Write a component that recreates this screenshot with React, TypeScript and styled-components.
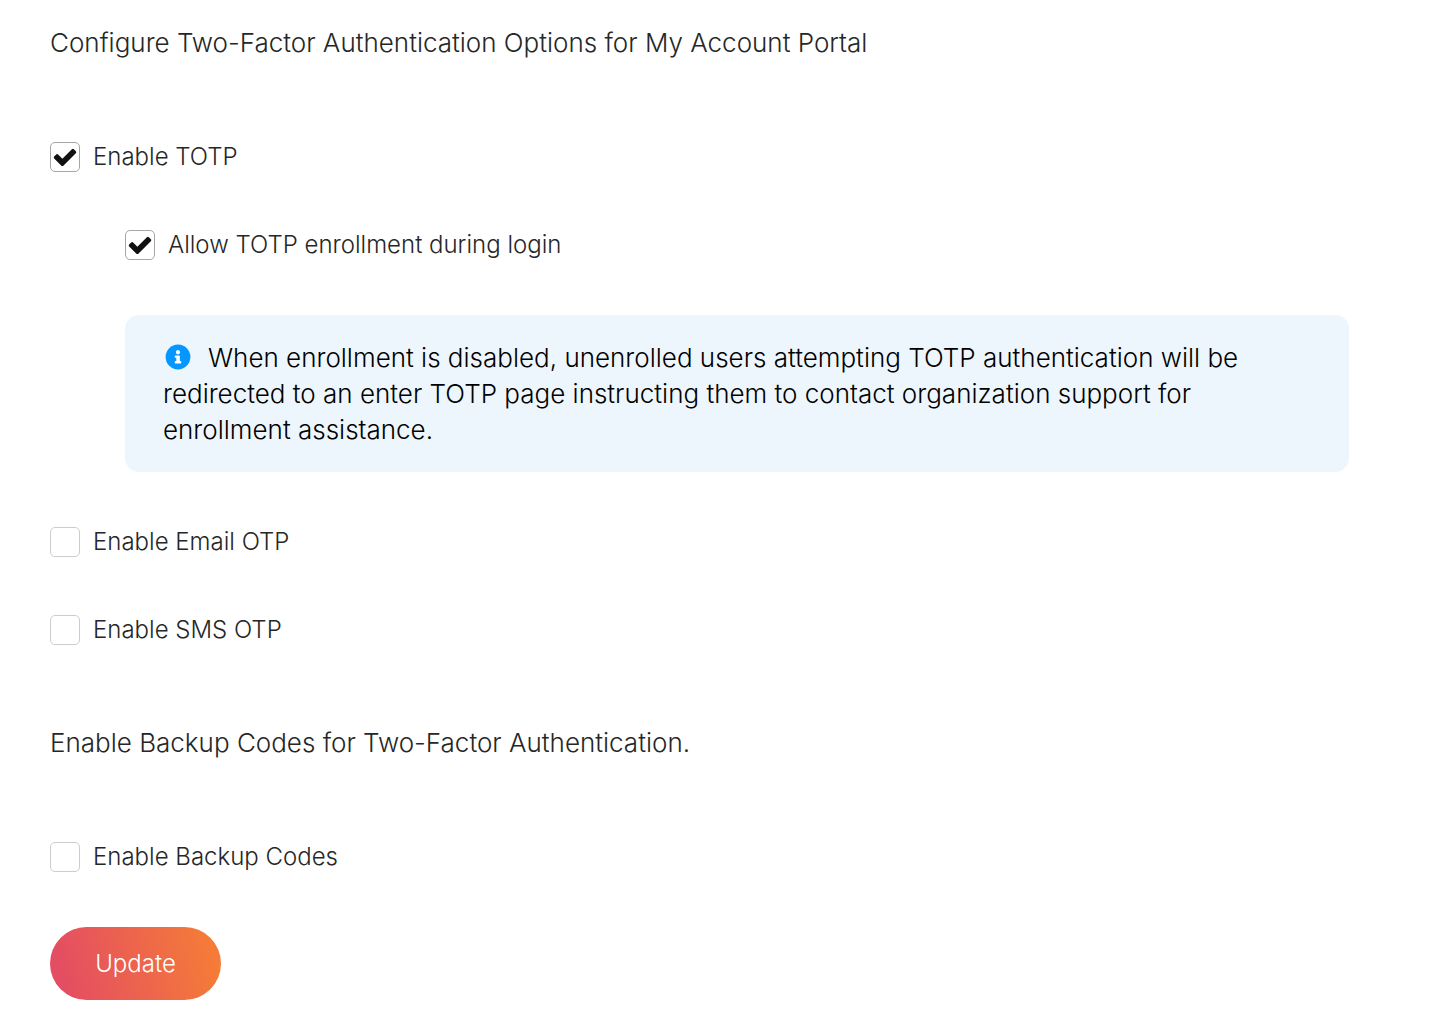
import React from "react";
import styled, { createGlobalStyle } from "styled-components";

const GlobalStyle = createGlobalStyle`
  *, *::before, *::after { box-sizing: border-box; }
  body {
    margin: 0;
    background: #fff;
    color: #252727;
    font-family: Inter, "Liberation Sans", sans-serif;
    font-weight: 350;
  }
`;

const Form = styled.form`
  display: flex;
  flex-direction: column;
  gap: 77px;
  padding: 25px 103px 10px 50px;
`;

const Section = styled.section`
  display: flex;
  flex-direction: column;
  align-items: flex-start;
`;

const Heading = styled.h2`
  margin: 0 0 78px;
  font-size: 26px;
  line-height: 36px;
  font-weight: inherit;
`;

const OptionList = styled.div`
  display: flex;
  flex-direction: column;
  align-self: stretch;
  gap: 52px;
`;

const Nested = styled.div`
  display: flex;
  flex-direction: column;
  gap: 52px;
  padding-left: 75px;
`;

const OptionLabel = styled.label`
  display: flex;
  align-items: center;
  align-self: flex-start;
  gap: 13px;
  font-size: 24px;
  line-height: 36px;
  cursor: pointer;
`;

const Box = styled.span`
  display: grid;
  width: 30px;
  height: 30px;

  > * {
    grid-area: 1 / 1;
  }

  svg {
    place-self: center;
    pointer-events: none;
    visibility: hidden;
  }

  input:checked + svg {
    visibility: visible;
  }
`;

const Checkbox = styled.input`
  appearance: none;
  width: 30px;
  height: 30px;
  margin: 0;
  border: 1px solid #ccc;
  border-radius: 5px;
  background: #fff;
  cursor: pointer;

  &:checked {
    border-color: #a6a6a6;
  }
`;

const Info = styled.p`
  margin: 0;
  padding: 25px 38px 24px;
  border-radius: 14px;
  background: #eef6fd;
  color: #000;
  font-size: 26px;
  line-height: 36px;
`;

const InfoIcon = styled.svg`
  width: 26px;
  height: 26px;
  margin: 0 17px 0 2px;
  vertical-align: -3px;
`;

const UpdateButton = styled.button`
  margin-top: 52px;
  min-width: 171px;
  padding: 0 42px;
  height: 73px;
  border: 0;
  border-radius: 37px;
  background: linear-gradient(75deg, #e44e62 10%, #f57b38 92%);
  color: #fff;
  font: inherit;
  font-size: 24px;
  line-height: 36px;
  cursor: pointer;
`;

function Option({ label, checked = false }: { label: string; checked?: boolean }) {
  return (
    <OptionLabel>
      <Box>
        <Checkbox type="checkbox" defaultChecked={checked} />
        <svg width="26" height="26" viewBox="0 0 1792 1792" aria-hidden="true">
          <path
            fill="#111"
            d="M1671 566q0 40-28 68l-724 724-136 136q-28 28-68 28t-68-28l-136-136-362-362q-28-28-28-68t28-68l136-136q28-28 68-28t68 28l294 295 656-657q28-28 68-28t68 28l136 136q28 28 28 68z"
          />
        </svg>
      </Box>
      {label}
    </OptionLabel>
  );
}

export default function App() {
  return (
    <>
      <GlobalStyle />
      <Form onSubmit={(e) => e.preventDefault()}>
        <Section>
          <Heading>Configure Two-Factor Authentication Options for My Account Portal</Heading>
          <OptionList>
            <Option label="Enable TOTP" checked />
            <Nested>
              <Option label="Allow TOTP enrollment during login" checked />
              <Info>
                <InfoIcon viewBox="0 0 512 512" aria-hidden="true">
                  <circle cx="256" cy="256" r="244" fill="#0397ff" />
                  <path
                    fill="#fff"
                    d="M256 118c23 0 42 19 42 42s-19 42-42 42-42-19-42-42 19-42 42-42zm64 254c0 7-5 12-12 12H204c-7 0-12-5-12-12v-24c0-7 5-12 12-12h18v-64h-18c-7 0-12-5-12-12v-24c0-7 5-12 12-12h76c7 0 12 5 12 12v100h16c7 0 12 5 12 12v24z"
                  />
                </InfoIcon>
                When enrollment is disabled, unenrolled users attempting TOTP authentication will be
                redirected to an enter TOTP page instructing them to contact organization support for
                enrollment assistance.
              </Info>
            </Nested>
            <Option label="Enable Email OTP" />
            <Option label="Enable SMS OTP" />
          </OptionList>
        </Section>
        <Section>
          <Heading>Enable Backup Codes for Two-Factor Authentication.</Heading>
          <Option label="Enable Backup Codes" />
          <UpdateButton type="submit">Update</UpdateButton>
        </Section>
      </Form>
    </>
  );
}
